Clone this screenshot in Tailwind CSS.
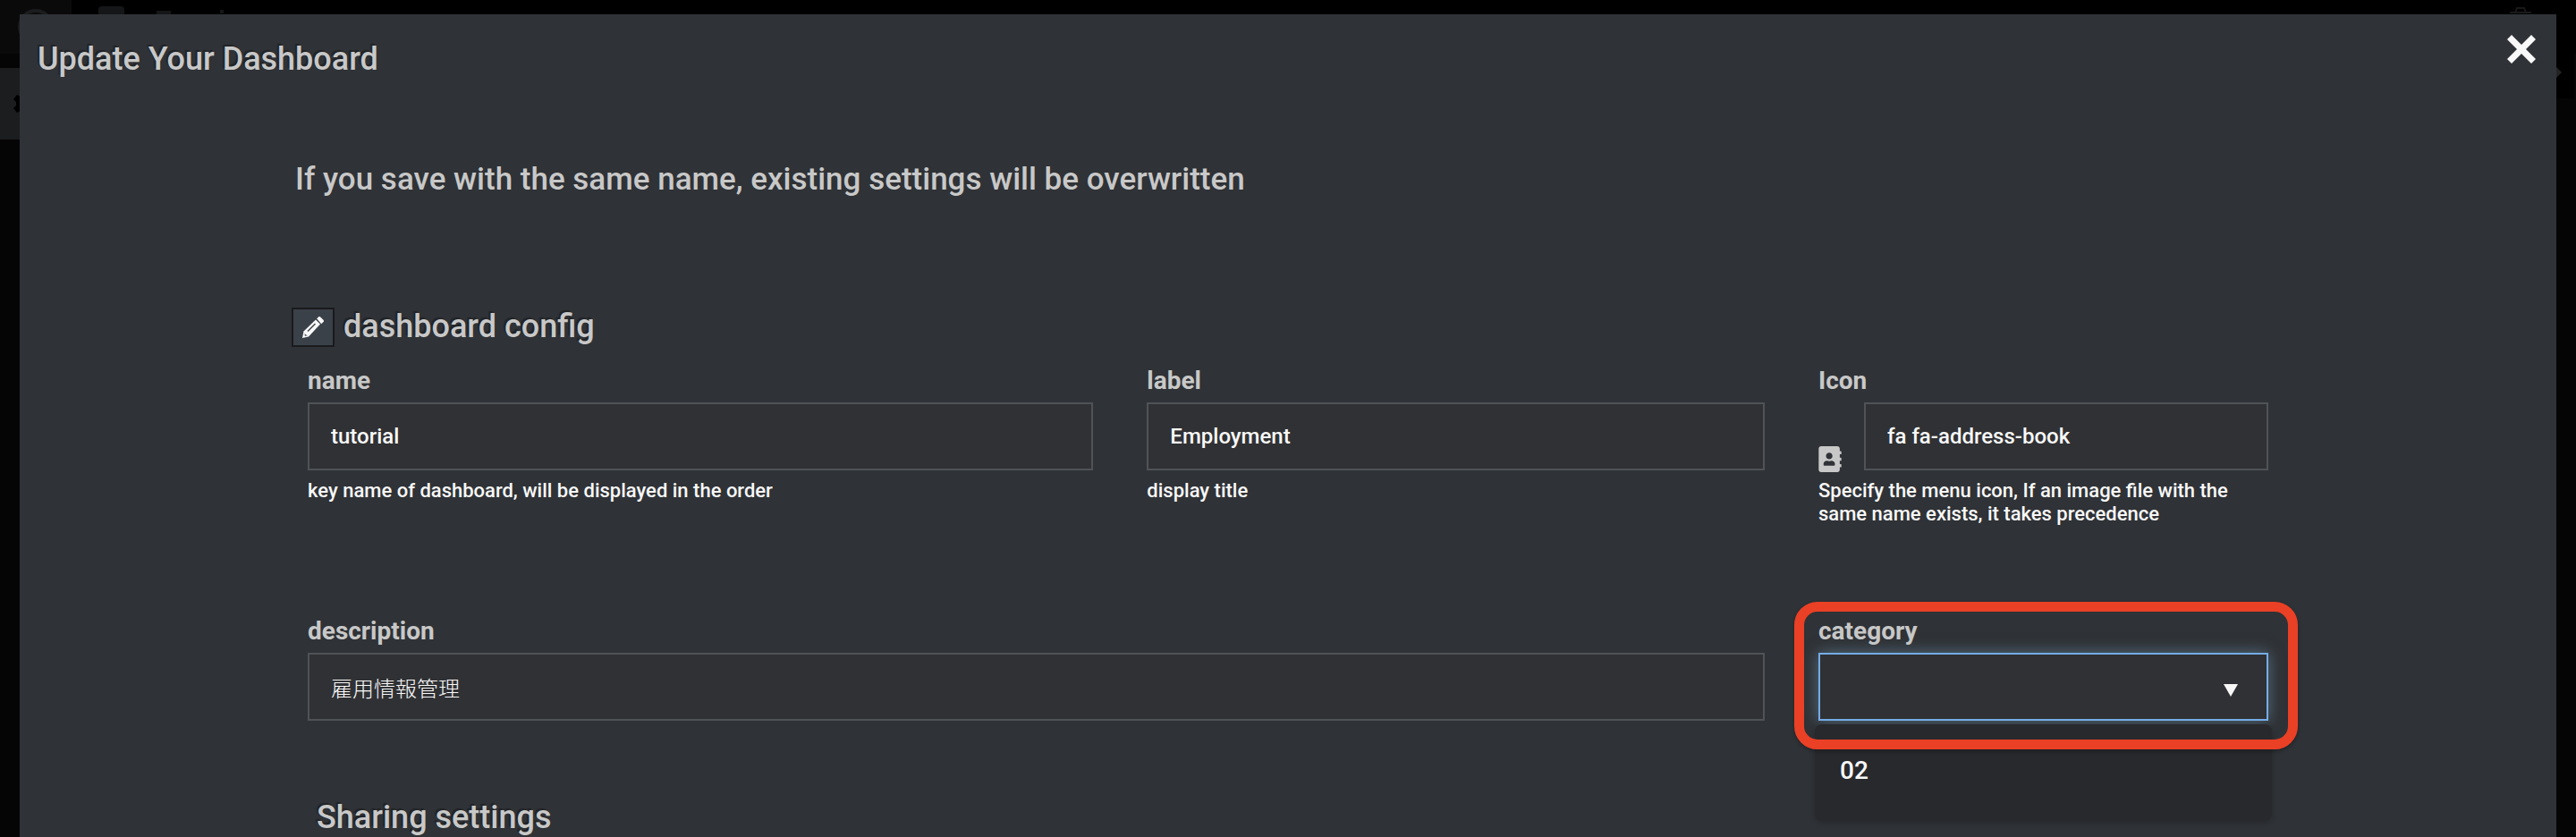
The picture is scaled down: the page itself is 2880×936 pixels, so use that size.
<!DOCTYPE html>
<html lang="en">
<head>
  <meta charset="UTF-8">
  <meta name="viewport" content="width=device-width, initial-scale=1.0">
  <title>Update Your Dashboard</title>
  <script src="https://cdn.jsdelivr.net/npm/@tailwindcss/browser@4"></script>
  <style>
    body { font-family: Roboto, 'Noto Sans CJK JP', sans-serif; }
    .heading-shadow { text-shadow: -2px -2px 1px rgba(0, 0, 0, 0.3); }
  </style>
</head>
<body class="bg-black h-screen overflow-hidden font-medium text-[#c8c8c8]">

<!-- Dimmed page behind the dialog -->
<div class="absolute inset-0 -z-10 bg-[#060506]" aria-hidden="true">
  <div class="h-[60px] bg-black flex items-start">
    <div class="w-20 h-full bg-[#0b0a0b] flex justify-center">
      <div class="mt-[10px] size-10 rounded-full border-4 border-[#1b1c1d]"></div>
    </div>
    <div class="mt-[7px] ml-[30px] w-[29px] h-5 rounded bg-[#151617]"></div>
    <div class="mt-3 ml-9 w-4 h-1 bg-[#151617]"></div>
    <div class="mt-[11px] ml-[55px] w-1 h-1 bg-[#151617]"></div>
    <svg class="mt-2 ml-auto mr-[49px] w-[26px] h-6" viewBox="0 0 26 24" fill="none" stroke="#191919" stroke-width="2"><path d="M1 6h24M7 6l2-5h8l2 5"/></svg>
  </div>
  <div class="flex items-start justify-between">
    <div class="mt-4 w-10 h-20 bg-[#1b1d1e] flex items-center">
      <svg class="ml-[14px] w-6 h-6" viewBox="0 0 24 24" fill="#000"><path d="M9 0h6v4l4-2 4 5-3 3v4l3 3-4 5-4-2v4H9v-4l-4 2-4-5 3-3v-4L1 7l4-5 4 2z"/></svg>
    </div>
    <div class="w-10 h-[50px] mr-[2px] bg-black flex items-center">
      <svg class="ml-[14px] w-3 h-3 mb-2" viewBox="0 0 12 12" fill="#242424"><path d="M6 0l6 6-6 6-6-6z"/></svg>
    </div>
  </div>
</div>

<!-- Dialog -->
<main class="mx-[22px] mt-4 min-h-full bg-[#2f3236]">
  <header class="flex justify-between items-start pl-5 pr-[23px] pt-[23px]">
    <h1 class="heading-shadow text-[36px] leading-[54px]">Update Your Dashboard</h1>
    <button type="button" aria-label="Close" class="text-[#f8f8f8]">
      <svg class="size-8" viewBox="0 0 32 32" fill="currentColor"><path d="M5 0l11 11L27 0l5 5-11 11 11 11-5 5-11-11L5 32l-5-5 11-11L0 5z"/></svg>
    </button>
  </header>

  <form class="px-[292px]">
    <p class="mt-[82px] ml-4 text-[35px] leading-[52px]">If you save with the same name, existing settings will be overwritten</p>

    <div class="mt-[117px] ml-3 mr-3 flex items-center">
      <button type="button" aria-label="Edit" class="w-12 h-11 flex items-center justify-center bg-[#3a4149] border-2 border-[#1a1b1d] text-[#f8f8f8]">
        <svg class="size-6" viewBox="0 0 24 24"><path fill="currentColor" d="M0 24l1.500-7.500L15 3.500l5 5L7 22.500z"/><path fill="currentColor" d="M16.200 2.300L18 .5c.7-.7 1.500-.7 2.200 0l3.300 3.300c.7.7.7 1.500 0 2.200l-2.300 2.300z"/><path stroke="#3a4149" stroke-width="1.500" fill="none" d="M6 16.500L14.500 8"/><path fill="#3a4149" d="M2.700 18.500l.9 1.800 2.400.9-3.200.6z"/></svg>
      </button>
      <h2 class="heading-shadow flex-1 ml-[10px] text-[36px] leading-[42px] pb-[2px]">dashboard config</h2>
    </div>

    <div class="grid grid-cols-12 pt-[22px]">
      <div class="col-span-5 px-[30px]">
        <label for="name" class="block text-[28px] leading-8 font-bold">name</label>
        <input id="name" type="text" value="tutorial" class="mt-2 w-full h-[76px] px-6 border-2 border-[#505356] bg-[#303134] text-2xl text-[#f8f8f8]">
        <p class="mt-[10px] text-[22px] leading-[26px] text-[#f8f8f8]">key name of dashboard, will be displayed in the order</p>
      </div>
      <div class="col-span-4 px-[30px]">
        <label for="label" class="block text-[28px] leading-8 font-bold">label</label>
        <input id="label" type="text" value="Employment" class="mt-2 w-full h-[76px] px-6 border-2 border-[#505356] bg-[#303134] text-2xl text-[#f8f8f8]">
        <p class="mt-[10px] text-[22px] leading-[26px] text-[#f8f8f8]">display title</p>
      </div>
      <div class="col-span-3 px-[30px]">
        <label for="icon" class="block text-[28px] leading-8 font-bold">Icon</label>
        <div class="mt-2 flex items-end">
          <svg class="w-[26px] h-[29px] -mb-[2px] mr-[25px]" viewBox="0 0 448 512" fill="currentColor"><path d="M436 160c6.600 0 12-5.400 12-12v-40c0-6.600-5.400-12-12-12h-20V48c0-26.500-21.500-48-48-48H48C21.500 0 0 21.500 0 48v416c0 26.500 21.500 48 48 48h320c26.500 0 48-21.500 48-48v-48h20c6.600 0 12-5.400 12-12v-40c0-6.600-5.400-12-12-12h-20v-64h20c6.600 0 12-5.400 12-12v-40c0-6.600-5.400-12-12-12h-20v-64h20zm-228-32c35.300 0 64 28.700 64 64s-28.700 64-64 64-64-28.700-64-64 28.700-64 64-64zm112 236.800c0 10.600-10 19.200-22.400 19.200H118.400C106 384 96 375.400 96 364.800v-19.200c0-31.800 30.100-57.600 67.200-57.600h5c12.300 5.100 25.700 8 39.800 8s27.600-2.900 39.800-8h5c37.100 0 67.200 25.800 67.200 57.600v19.200z"/></svg>
          <input id="icon" type="text" value="fa fa-address-book" class="flex-1 min-w-0 h-[76px] px-6 border-2 border-[#505356] bg-[#303134] text-2xl text-[#f8f8f8]">
        </div>
        <p class="mt-[10px] text-[22px] leading-[26px] text-[#f8f8f8]">Specify the menu icon, If an image file with the same name exists, it takes precedence</p>
      </div>
    </div>

    <div class="grid grid-cols-12 mt-[102px]">
      <div class="col-span-9 px-[30px]">
        <label for="description" class="block text-[28px] leading-8 font-bold">description</label>
        <input id="description" type="text" value="雇用情報管理" class="mt-2 w-full h-[76px] px-6 border-2 border-[#505356] bg-[#303134] text-2xl font-light text-[#f8f8f8]">
      </div>
      <div class="col-span-3 px-[30px] relative">
        <label for="category" class="block text-[28px] leading-8 font-bold">category</label>
        <div class="mt-2 relative">
          <select id="category" class="block appearance-none w-full h-[76px] px-6 border-2 border-[#75ace6] bg-[#303134] shadow-[0_0_16px_rgba(120,170,200,0.5)] text-2xl text-[#f8f8f8]">
            <option></option>
          </select>
          <svg class="absolute right-[34px] top-[35px] w-4 h-[14px]" viewBox="0 0 16 14" fill="#f8f8f8"><path d="M0 0h16L8 14z"/></svg>
          <ul class="absolute -inset-x-1 top-20 h-[108px] rounded-lg bg-[#28292c] shadow-[0_2px_6px_rgba(0,0,0,0.2)] pt-9 px-7 text-[28px] leading-8 text-[#f8f8f8]">
            <li>02</li>
          </ul>
        </div>
        <div class="absolute inset-x-[3px] -right-[3px] -top-[17px] h-[165px] border-[11px] border-[#ea4025] rounded-[26px] shadow-[0_2px_4px_rgba(0,0,0,0.3)] pointer-events-none"></div>
      </div>
    </div>

    <h2 class="heading-shadow mt-[86px] mx-10 text-[36px] leading-[44px]">Sharing settings</h2>
  </form>
</main>

</body>
</html>
